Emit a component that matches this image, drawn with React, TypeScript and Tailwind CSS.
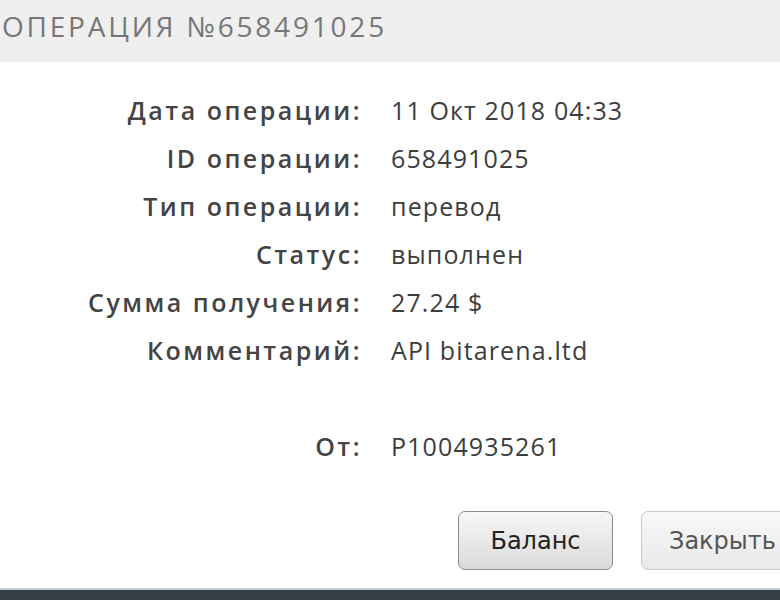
const rows: [string, string][] = [
  ["Дата операции:", "11 Окт 2018 04:33"],
  ["ID операции:", "658491025"],
  ["Тип операции:", "перевод"],
  ["Статус:", "выполнен"],
  ["Сумма получения:", "27.24 $"],
  ["Комментарий:", "API bitarena.ltd"],
];

export default function App() {
  return (
    <div className="w-[780px] h-[600px] overflow-hidden bg-white flex flex-col font-['Open_Sans',sans-serif]">
      {/* Header */}
      <div className="h-[62px] shrink-0 bg-[#efefef] pl-[2px] pt-[9px]">
        <h1 className="text-[28px] leading-[34px] tracking-[0.1em] text-[#777] whitespace-nowrap">
          ОПЕРАЦИЯ №658491025
        </h1>
      </div>

      {/* Details */}
      <div className="grid grid-cols-[362px_1fr] gap-x-[29px] gap-y-[12px] pt-[30px] text-[25px] leading-[36px] text-[#3d3d3d]">
        {rows.map(([k, v]) => (
          <div key={k} className="contents">
            <div className="text-right font-semibold text-[#444] tracking-[0.1em] whitespace-nowrap">{k}</div>
            <div className="tracking-[0.045em] whitespace-nowrap">{v}</div>
          </div>
        ))}
        <div className="h-[36px]" />
        <div />
        <div className="text-right font-semibold text-[#444] tracking-[0.1em]">От:</div>
        <div className="tracking-[0.045em]">P1004935261</div>
      </div>

      {/* Buttons */}
      <div className="flex gap-[28px] pl-[458px] mt-auto mb-[18px] font-['DejaVu_Sans',sans-serif]">
        <button className="w-[155px] h-[59px] shrink-0 rounded-[7px] border border-[#8c8c8c] bg-gradient-to-b from-[#f7f7f7] to-[#dadada] text-[24px] text-[#222]">
          Баланс
        </button>
        <button className="w-[160px] h-[59px] shrink-0 rounded-[7px] border border-[#c9c9c9] bg-gradient-to-b from-[#f8f8f8] to-[#e9e9e9] text-[24px] text-[#555] text-left pl-[27px]">
          Закрыть
        </button>
      </div>

      {/* Bottom bar */}
      <div className="h-[12px] shrink-0 bg-[#333e47] border-t-2 border-[#c7cbcf]" />
    </div>
  );
}
